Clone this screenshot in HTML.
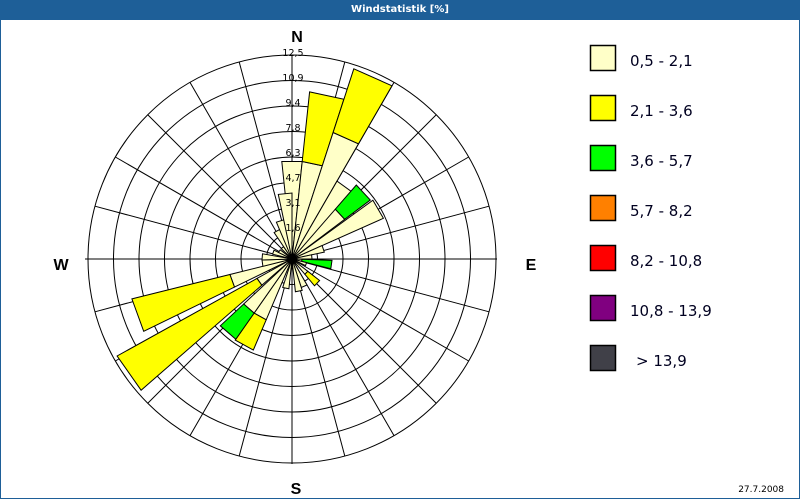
<!DOCTYPE html>
<html><head><meta charset="utf-8">
<style>
html,body{margin:0;padding:0;background:#fff;}
#wrap{position:relative;width:800px;height:500px;overflow:hidden;background:#fff;}
#title{position:absolute;left:0;top:0;width:800px;height:20px;background:#1e5f98;color:#fff;font:bold 10px "DejaVu Sans","Liberation Sans",sans-serif;text-align:center;line-height:19px;}
#frame{position:absolute;left:0;top:20px;width:798px;height:478px;border:1px solid #1e5f98;border-top:none;}
svg{position:absolute;left:0;top:0;}
</style></head>
<body><div id="wrap">
<div id="frame"></div>
<div id="title">Windstatistik [%]</div>
<svg id="s" width="800" height="500" xmlns="http://www.w3.org/2000/svg" font-family="DejaVu Sans, Liberation Sans, sans-serif">
<g id="grid" stroke="#000" stroke-width="1" fill="none"></g>
<g id="bars" stroke="#000" stroke-width="1"></g>
<g id="lbl" font-size="9.5" fill="#000" text-anchor="middle">
<text x="293" y="56">12,5</text>
<text x="293" y="81">10,9</text>
<text x="293" y="106">9,4</text>
<text x="293" y="131">7,8</text>
<text x="293" y="156">6,3</text>
<text x="293" y="181">4,7</text>
<text x="293" y="206">3,1</text>
<text x="293" y="231">1,6</text>
</g>
<g font-size="16" font-weight="bold" fill="#000" text-anchor="middle" font-family="Liberation Sans, sans-serif">
<text x="297" y="42">N</text>
<text x="296" y="494">S</text>
<text x="61" y="270">W</text>
<text x="531" y="270">E</text>
</g>
<g stroke="#000" stroke-width="1.5">
<rect x="590.5" y="45.5" width="25" height="25" fill="#ffffc8"/>
<rect x="590.5" y="95.5" width="25" height="25" fill="#ffff00"/>
<rect x="590.5" y="145.5" width="25" height="25" fill="#00ff00"/>
<rect x="590.5" y="195.5" width="25" height="25" fill="#ff8000"/>
<rect x="590.5" y="245.5" width="25" height="25" fill="#ff0000"/>
<rect x="590.5" y="295.5" width="25" height="25" fill="#800080"/>
<rect x="590.5" y="345.5" width="25" height="25" fill="#404048"/>
</g>
<g font-size="15" fill="#000020">
<text x="630" y="66">0,5 - 2,1</text>
<text x="630" y="116">2,1 - 3,6</text>
<text x="630" y="166">3,6 - 5,7</text>
<text x="630" y="216">5,7 - 8,2</text>
<text x="630" y="266">8,2 - 10,8</text>
<text x="630" y="316">10,8 - 13,9</text>
<text x="636" y="366">&gt; 13,9</text>
</g>
<text x="784" y="492" font-size="9" fill="#000" text-anchor="end">27.7.2008</text>
</svg>
<script>
var cx=292,cy=259,NS="http://www.w3.org/2000/svg",R=25.5;
var g=document.getElementById('grid'),b=document.getElementById('bars');
function el(p,t,a){var e=document.createElementNS(NS,t);for(var k in a)e.setAttribute(k,a[k]);p.appendChild(e);return e;}
for(var k=1;k<=8;k++)el(g,'circle',{cx:cx,cy:cy,r:R*k});
for(var a=0;a<360;a+=15){var r=a*Math.PI/180;el(g,'line',{x1:cx,y1:cy,x2:cx+8*R*Math.sin(r),y2:cy-8*R*Math.cos(r)});}
el(g,'line',{x1:85,y1:cy,x2:497,y2:cy});
el(g,'line',{x1:cx,y1:56,x2:cx,y2:464});
var C={c:'#ffffc8',y:'#ffff00',g:'#00ff00'};
var data=[[0,[['c',98]]],[12,[['c',98],['y',168]]],[24,[['c',133],['y',200]]],[36,[['c',90]]],[47,[['c',66],['g',98]]],[60,[['c',100]]],[72,[['c',33]]],[84,[['c',20]]],[98,[['c',10],['g',40]]],[110,[['c',15]]],[134,[['c',20],['y',35]]],[156,[['c',30]]],[168,[['c',33]]],[192,[['c',30]]],[209,[['c',66],['y',99]]],[221,[['c',66],['g',98]]],[235,[['c',40],['y',200]]],[250,[['c',64],['y',165]]],[262,[['c',30]]],[274,[['c',30]]],[290,[['c',20]]],[302,[['c',15]]],[320,[['c',15]]],[332,[['c',32]]],[343,[['c',40]]],[354,[['c',66]]]];
function pt(r,a){a=a*Math.PI/180;return (cx+r*Math.sin(a)).toFixed(1)+','+(cy-r*Math.cos(a)).toFixed(1);}
data.forEach(function(d){var r0=0;d[1].forEach(function(s){var r1=s[1],a0=d[0]-6,a1=d[0]+6;
el(b,'polygon',{points:[pt(r0,a0),pt(r1,a0),pt(r1,a1),pt(r0,a1)].join(' '),fill:C[s[0]]});r0=r1;});});
el(b,'circle',{cx:cx,cy:cy,r:3,fill:'#000'});
</script>
</div></body></html>
